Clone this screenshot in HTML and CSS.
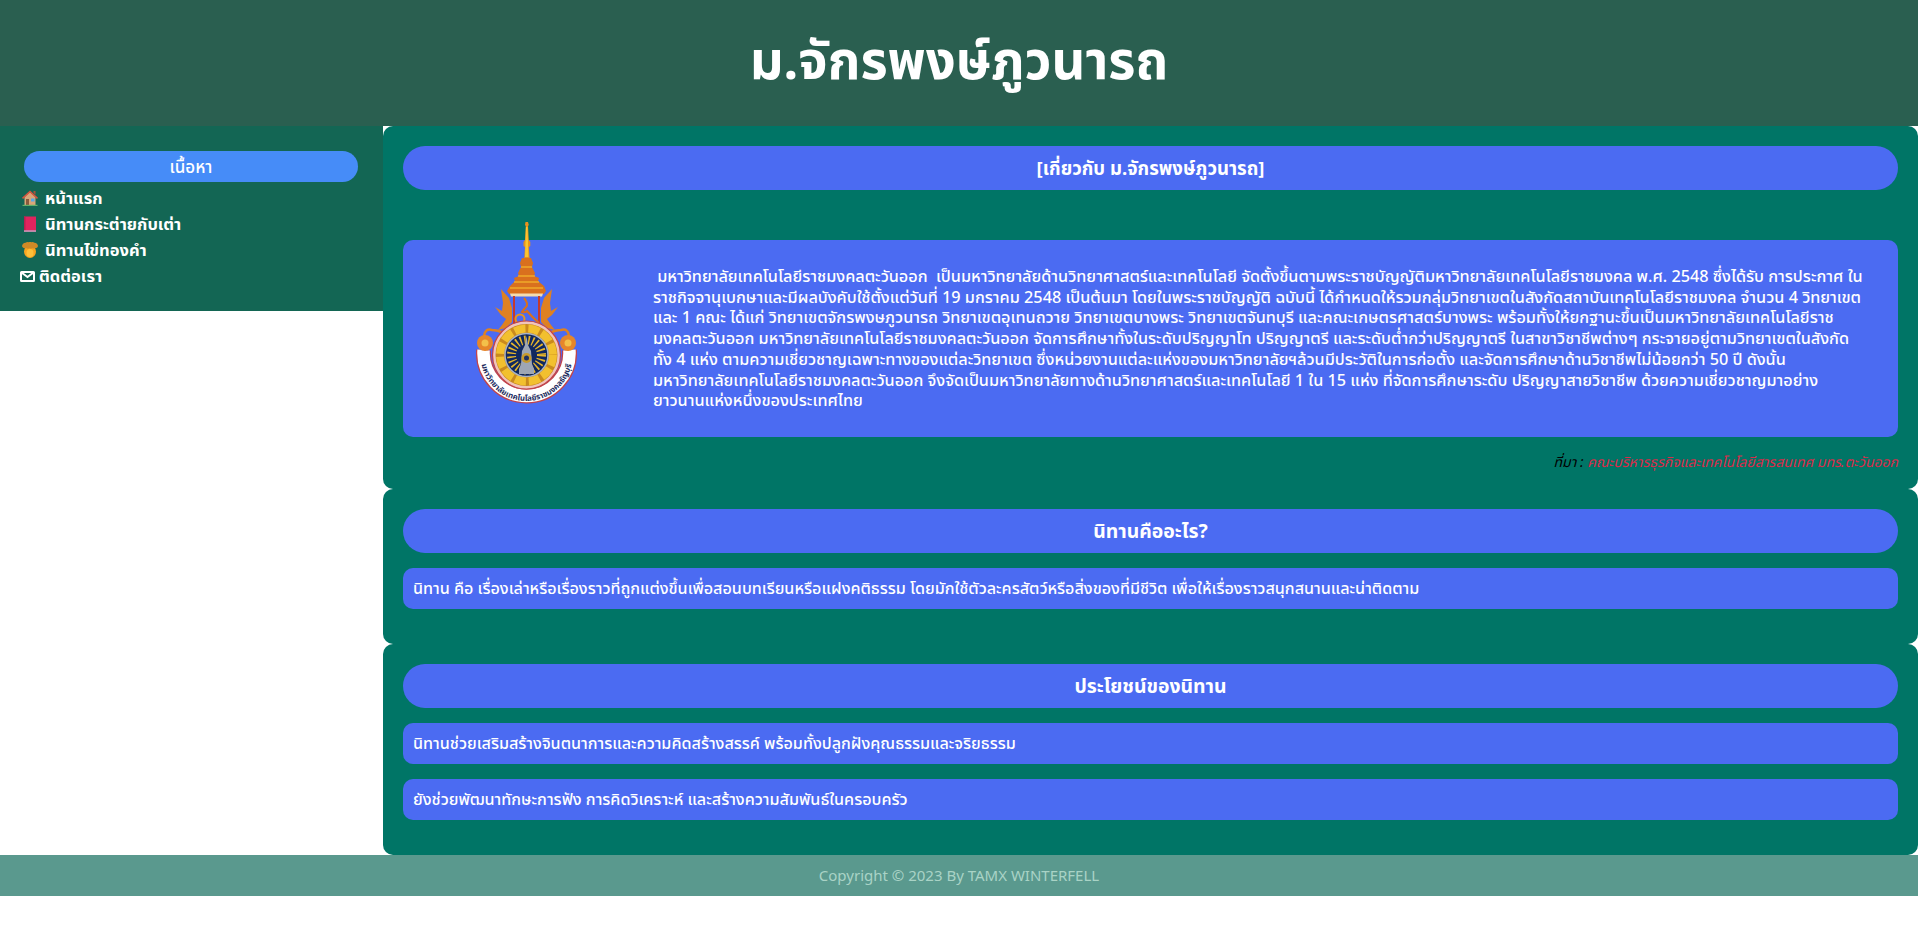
FILE: index.html
```html
<!DOCTYPE html>
<html lang="th">
<head>
    <meta charset="UTF-8">
    <meta name="viewport" content="width=device-width, initial-scale=1.0">
    <title>ม.จักรพงษ์ภูวนารถ</title>
    <link rel="stylesheet" href="styles.css">
</head>
<body>

<header class="site-header">
    <h1>ม.จักรพงษ์ภูวนารถ</h1>
</header>

<div class="page-row">
    <nav class="sidebar">
        <div class="sidebar-title">เนื้อหา</div>
        <ul class="menu">
            <li>
                <svg class="menu-icon" viewBox="0 0 16 16">
                    <path d="M2.500 7 8 2l5.500 5v8h-11z" fill="#d9a679"/>
                    <path d="M8 .500 0 7.800l1 1.100L8 2.600l7 6.300 1-1.100z" fill="#d8553f"/>
                    <path d="M11.500 1h2v3.800l-2-1.800z" fill="#a9523c"/>
                    <path d="M4 9h3v6H4z" fill="#8a5a3c"/>
                    <path d="M9 8.500h3.500v3H9z" fill="#5aa9e6"/>
                    <path d="M0.500 14.800h15V16H.500z" fill="#63b06a"/>
                </svg>
                <a href="#">หน้าแรก</a>
            </li>
            <li>
                <svg class="menu-icon" viewBox="0 0 16 16">
                    <path d="M2 .500h12v15H2z" fill="#e0245e"/>
                    <path d="M2 .500h1.500v15H2z" fill="#b91e50"/>
                    <path d="M2 14.300h12v1.500H2z" fill="#c9a0c0"/>
                </svg>
                <a href="#">นิทานกระต่ายกับเต่า</a>
            </li>
            <li>
                <svg class="menu-icon" viewBox="0 0 16 16">
                    <ellipse cx="8" cy="9.500" rx="6" ry="6.500" fill="#f8a51f"/>
                    <ellipse cx="8" cy="11" rx="3.500" ry="4" fill="#fdc03a"/>
                    <path d="M0 4q.5-3 3.500-3.300 1.500-1 3-.5 1.500-.6 3 0 1.500-.4 3 .5Q15.500 1 16 4q-.5 2.500-2.500 2-1.500 1-3 .2-1.500.9-3 .1-1.500.9-3 0Q.5 6.500 0 4z" fill="#cf8a26"/>
                </svg>
                <a href="#">นิทานไข่ทองคำ</a>
            </li>
            <li class="menu-contact">
                <svg class="mail-icon" viewBox="0 0 15 11">
                    <rect x="1" y="1" width="13" height="9" rx=".5" fill="none" stroke="#fff" stroke-width="2"/>
                    <path d="M1.500 1.500 7.500 6l6-4.500" fill="none" stroke="#fff" stroke-width="2"/>
                </svg>
                <a href="#">ติดต่อเรา</a>
            </li>
        </ul>
    </nav>

    <main class="content">
        <section class="card">
            <h3 class="card-title card-title-about">[เกี่ยวกับ ม.จักรพงษ์ภูวนารถ]</h3>
            <div class="about-box">
                <div class="logo-wrap">
                    <svg class="logo" viewBox="0 0 101 183">
                        <!-- spire -->
                        <path d="M49.500 0h2.500l.8 3-.8 1 .8 14 1.500 2v4l-1.500 1 .8 11h-5.400l.8-11-1.500-1v-4l1.500-2 .8-14-.8-1z" fill="#e8901e"/>
                        <path d="M50 5h1.500l1 30h-3.500z" fill="#fbc52f"/>
                        <path d="M46 36h9l2 5-1 4 3 6-1 3 5 2-1 3 6 5 2 5-2 3H33l-2-3 3-5 5-5-1-3 5-2-1-3 3-6-1-4z" fill="#d9701e"/>
                        <path d="M45 45h11M42 54h17M38 60h25M34 66h33" stroke="#f0a92a" stroke-width="1.500"/>
                        <path d="M34 71.500h33l-1 3H35z" fill="#f3dcb0"/>
                        <!-- naga arms -->
                        <path d="M37 74h2v28h-2zM62 74h2v28h-2z" fill="#c43a2e"/>
                        <path d="M25 67l8 9 3 10v14l-6 6-8 2 4-5 4-6-5-4-6-8 7 4 1-8z" fill="#df8122"/>
                        <path d="M76 67l-8 9-3 10v14l6 6 8 2-4-5-4-6 5-4 6-8-7 4-1-8z" fill="#df8122"/>
                        <path d="M8 114q1-8 8-6 5 0 12 3l5-2" fill="none" stroke="#df8122" stroke-width="2.500"/>
                        <path d="M93 114q-1-8-8-6-5 0-12 3l-5-2" fill="none" stroke="#df8122" stroke-width="2.500"/>
                        <path d="M48 76q5 6 2 9t-4 5q3 1 5-1 5 6 12 12" fill="none" stroke="#d9701e" stroke-width="2"/>
                        <circle cx="44" cy="97" r="4.500" fill="none" stroke="#e8941f" stroke-width="2"/>
                        <!-- ribbon -->
                        <path d="M7.600 128a43 43 0 1 0 85.800 0" fill="none" stroke="#c2444a" stroke-width="15"/>
                        <path d="M7.600 128a43 43 0 1 0 85.800 0" fill="none" stroke="#fff" stroke-width="12.500"/>
                        <path id="ribbon-line" d="M4.500 133a46 46 0 0 0 92 0" fill="none"/>
                        <text class="logo-text" text-anchor="middle"><textPath href="#ribbon-line" startOffset="50%">มหาวิทยาลัยเทคโนโลยีราชมงคลธัญบุรี</textPath></text>
                        <circle cx="9" cy="121" r="8" fill="#e6862a"/>
                        <circle cx="9" cy="121" r="3.500" fill="#f3c04a"/>
                        <circle cx="92" cy="121" r="8" fill="#e6862a"/>
                        <circle cx="92" cy="121" r="3.500" fill="#f3c04a"/>
                        <!-- seal -->
                        <circle cx="50.500" cy="133" r="34" fill="#f0c4bb" stroke="#c2444a" stroke-width="1.200"/>
                        <circle cx="50.500" cy="133" r="31" fill="#c98a1e"/>
                        <circle cx="50.500" cy="133" r="26.500" fill="none" stroke="#f2c02f" stroke-width="8" stroke-dasharray="11 3"/>
                        <circle cx="50.500" cy="133" r="21.500" fill="#10285f" stroke="#a9b3c4" stroke-width="1.500"/>
                        <circle cx="50.500" cy="133" r="15" fill="none" stroke="#e5b52c" stroke-width="9" stroke-dasharray="1.500 2.500"/>
                        <path d="M50.500 114l1.500 9 3 6 1 13 2 5v5H43v-5l2-5 1-13 3-6z" fill="#9ea6b4"/>
                        <circle cx="50.500" cy="136" r="5" fill="#c89a2a"/>
                        <circle cx="50.500" cy="136" r="2.500" fill="#20305f"/>
                    </svg>
                </div>
                <p class="about-text">&nbsp;มหาวิทยาลัยเทคโนโลยีราชมงคลตะวันออก &nbsp;เป็นมหาวิทยาลัยด้านวิทยาศาสตร์และเทคโนโลยี จัดตั้งขึ้นตามพระราชบัญญัติมหาวิทยาลัยเทคโนโลยีราชมงคล พ.ศ. 2548 ซึ่งได้รับ การประกาศ ใน<br>ราชกิจจานุเบกษาและมีผลบังคับใช้ตั้งแต่วันที่ 19 มกราคม 2548 เป็นต้นมา โดยในพระราชบัญญัติ ฉบับนี้ ได้กำหนดให้รวมกลุ่มวิทยาเขตในสังกัดสถาบันเทคโนโลยีราชมงคล จำนวน 4 วิทยาเขต<br>และ 1 คณะ ได้แก่ วิทยาเขตจักรพงษภูวนารถ วิทยาเขตอุเทนถวาย วิทยาเขตบางพระ วิทยาเขตจันทบุรี และคณะเกษตรศาสตร์บางพระ พร้อมทั้งให้ยกฐานะขึ้นเป็นมหาวิทยาลัยเทคโนโลยีราช<br>มงคลตะวันออก มหาวิทยาลัยเทคโนโลยีราชมงคลตะวันออก จัดการศึกษาทั้งในระดับปริญญาโท ปริญญาตรี และระดับต่ำกว่าปริญญาตรี ในสาขาวิชาชีพต่างๆ กระจายอยู่ตามวิทยาเขตในสังกัด<br>ทั้ง 4 แห่ง ตามความเชี่ยวชาญเฉพาะทางของแต่ละวิทยาเขต ซึ่งหน่วยงานแต่ละแห่งของมหาวิทยาลัยฯล้วนมีประวัติในการก่อตั้ง และจัดการศึกษาด้านวิชาชีพไม่น้อยกว่า 50 ปี ดังนั้น<br>มหาวิทยาลัยเทคโนโลยีราชมงคลตะวันออก จึงจัดเป็นมหาวิทยาลัยทางด้านวิทยาศาสตร์และเทคโนโลยี 1 ใน 15 แห่ง ที่จัดการศึกษาระดับ ปริญญาสายวิชาชีพ ด้วยความเชี่ยวชาญมาอย่าง<br>ยาวนานแห่งหนึ่งของประเทศไทย</p>
            </div>
            <p class="source">ที่มา : <span class="source-name">คณะบริหารธุรกิจและเทคโนโลยีสารสนเทศ มทร.ตะวันออก</span></p>
        </section>

        <section class="card">
            <h3 class="card-title">นิทานคืออะไร?</h3>
            <p class="text-box">นิทาน คือ เรื่องเล่าหรือเรื่องราวที่ถูกแต่งขึ้นเพื่อสอนบทเรียนหรือแฝงคติธรรม โดยมักใช้ตัวละครสัตว์หรือสิ่งของที่มีชีวิต เพื่อให้เรื่องราวสนุกสนานและน่าติดตาม</p>
        </section>

        <section class="card">
            <h3 class="card-title">ประโยชน์ของนิทาน</h3>
            <p class="text-box">นิทานช่วยเสริมสร้างจินตนาการและความคิดสร้างสรรค์ พร้อมทั้งปลูกฝังคุณธรรมและจริยธรรม</p>
            <p class="text-box">ยังช่วยพัฒนาทักษะการฟัง การคิดวิเคราะห์ และสร้างความสัมพันธ์ในครอบครัว</p>
        </section>
    </main>
</div>

<footer class="site-footer">Copyright © 2023 By TAMX WINTERFELL</footer>

</body>
</html>
```

FILE: styles.css
```css
body {
    font-family: "Noto Sans", "Noto Sans Thai", sans-serif;
    background-color: #fff;
    color: #fff;
    margin: 0;
}
.site-header {
    height: 126px;
    background-color: #2a5f50;
    display: flex;
    align-items: center;
    justify-content: center;
}
.site-header h1 {
    margin: 0;
    font-size: 52.500px;
    font-weight: 700;
}
.page-row {
    display: flex;
    align-items: flex-start;
}
.sidebar {
    width: 383px;
    height: 185px;
    box-sizing: border-box;
    flex-shrink: 0;
    padding: 25px 25px 0 20px;
    background-color: #136654;
}
.sidebar-title {
    margin-left: 4px;
    height: 31px;
    line-height: 31px;
    border-radius: 16px;
    background-color: #468cf8;
    text-align: center;
    font-size: 17px;
    font-weight: 500;
}
.menu {
    list-style: none;
    margin: 3px 0 0;
    padding: 0;
    font-size: 16.500px;
    font-weight: 700;
}
.menu li {
    height: 26px;
    display: flex;
    align-items: center;
    gap: 7px;
    padding-left: 2px;
}
.menu a {
    color: #fff;
    text-decoration: none;
}
.menu-icon {
    width: 16px;
    height: 16px;
}
.menu .menu-contact {
    gap: 4px;
    padding-left: 0;
}
.mail-icon {
    width: 15px;
    height: 11px;
}
.content {
    flex: 1;
    min-width: 0;
}
.card {
    padding: 20px;
    background-color: #007566;
    border-radius: 10px;
}
.card-title {
    margin: 0 0 15px;
    height: 44px;
    line-height: 44px;
    border-radius: 22px;
    background-color: #4b6bf2;
    text-align: center;
    font-size: 19.400px;
    font-weight: 700;
}
.card-title-about {
    font-size: 18.600px;
}
.text-box {
    margin: 0 0 15px;
    height: 41px;
    line-height: 41px;
    box-sizing: border-box;
    padding: 0 10px;
    border-radius: 10px;
    background-color: #4b6bf2;
    font-size: 16.150px;
    font-weight: 500;
}
.about-box {
    margin-top: 50px;
    height: 197px;
    display: flex;
    align-items: center;
    border-radius: 10px;
    background-color: #4b6bf2;
}
.logo-wrap {
    width: 247px;
    flex-shrink: 0;
    display: flex;
    justify-content: center;
}
.logo {
    width: 101px;
    height: 183px;
    margin-top: -50px;
    overflow: visible;
}
.logo-text {
    font-size: 7.800px;
    font-weight: 700;
    fill: #1d2c5e;
}
.about-text {
    margin: 0 0 0 3px;
    font-size: 16.240px;
    font-weight: 500;
    line-height: 20.700px;
    white-space: nowrap;
}
.source {
    margin: 0;
    box-sizing: border-box;
    height: 32px;
    padding-top: 14px;
    line-height: 22px;
    text-align: right;
    color: #000;
    font-size: 14px;
    font-style: italic;
}
.source-name {
    color: #dc2a4a;
}
.site-footer {
    height: 41px;
    line-height: 41px;
    background-color: #5a998e;
    color: #a9d3c6;
    text-align: center;
    font-size: 15px;
}
```
